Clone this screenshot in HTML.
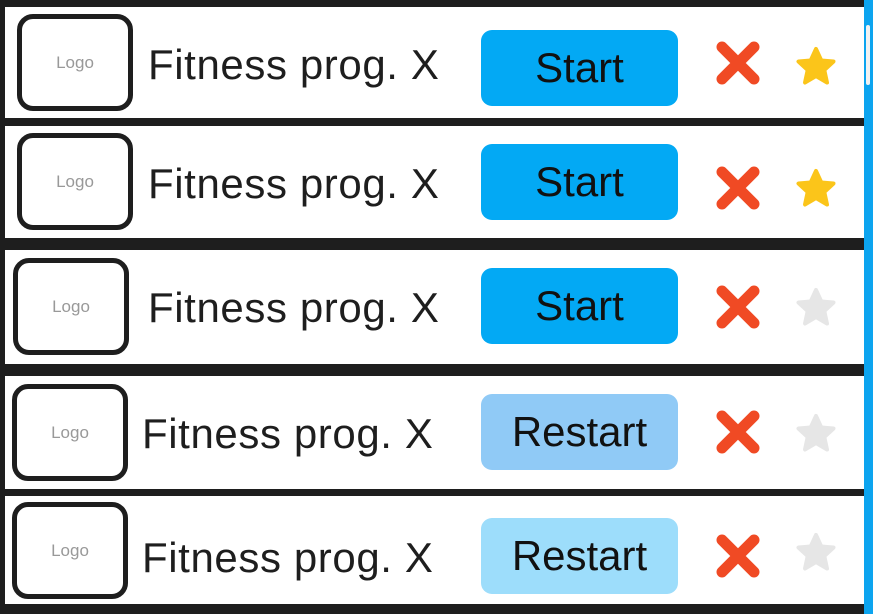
<!DOCTYPE html>
<html><head><meta charset="utf-8"><style>
*{margin:0;padding:0;box-sizing:border-box}
body{width:873px;height:614px;background:#1e1e1e;position:relative;overflow:hidden;font-family:"Liberation Sans",sans-serif}
.row{position:absolute;left:5px;width:859px;background:#fff}
.logo{position:absolute;width:116px;height:97px;border:5px solid #1e1e1e;border-radius:16px;color:#999;font-size:17px;display:flex;align-items:center;justify-content:center}
.t{position:absolute;font-size:42px;letter-spacing:0.6px;color:#1e1e1e;white-space:nowrap;line-height:1}
.b{position:absolute;left:481px;width:197px;height:76px;border-radius:11px;font-size:42px;color:#111;display:flex;align-items:center;justify-content:center}
svg{position:absolute}
</style></head><body>
<div class="row" style="top:7px;height:111px"></div>
<div class="row" style="top:126px;height:112px"></div>
<div class="row" style="top:250px;height:114px"></div>
<div class="row" style="top:376px;height:113px"></div>
<div class="row" style="top:496px;height:108px"></div>
<div style="position:absolute;left:864px;top:0;width:9px;height:614px;background:#0ca4ef"></div>
<div style="position:absolute;left:866px;top:25px;width:4px;height:60px;background:#f2f2f2;border-radius:2px"></div>

<div class="logo" style="left:17px;top:14px">Logo</div>
<div class="logo" style="left:17px;top:133px">Logo</div>
<div class="logo" style="left:13px;top:258px">Logo</div>
<div class="logo" style="left:12px;top:384px">Logo</div>
<div class="logo" style="left:12px;top:502px">Logo</div>

<div class="t" style="left:148px;top:44px">Fitness prog. X</div>
<div class="t" style="left:148px;top:163px">Fitness prog. X</div>
<div class="t" style="left:148px;top:287px">Fitness prog. X</div>
<div class="t" style="left:142px;top:413px">Fitness prog. X</div>
<div class="t" style="left:142px;top:537px">Fitness prog. X</div>

<div class="b" style="top:30px;background:#03a9f4">Start</div>
<div class="b" style="top:144px;background:#03a9f4">Start</div>
<div class="b" style="top:268px;background:#03a9f4">Start</div>
<div class="b" style="top:394px;background:#90caf6">Restart</div>
<div class="b" style="top:518px;background:#9dddfb">Restart</div>

<svg width="873" height="614" style="left:0;top:0">
<defs>
<g id="x"><path d="M-16,-16L16,16M16,-16L-16,16" stroke="#f04a24" stroke-width="11" stroke-linecap="round"/></g>
<g id="s"><polygon points="0,-18 5.3,-6.5 17.5,-5.5 8.3,3 11,15.5 0,9 -11,15.5 -8.3,3 -17.5,-5.5 -5.3,-6.5" stroke-linejoin="round" stroke-width="4"/></g>
</defs>
<use href="#x" x="738" y="63"/>
<use href="#x" x="738" y="188"/>
<use href="#x" x="738" y="307"/>
<use href="#x" x="738" y="432"/>
<use href="#x" x="738" y="556"/>
<use href="#s" x="816" y="67" fill="#fbc51a" stroke="#fbc51a"/>
<use href="#s" x="816" y="189" fill="#fbc51a" stroke="#fbc51a"/>
<use href="#s" x="816" y="308" fill="#e6e6e6" stroke="#e6e6e6"/>
<use href="#s" x="816" y="434" fill="#e6e6e6" stroke="#e6e6e6"/>
<use href="#s" x="816" y="553" fill="#e6e6e6" stroke="#e6e6e6"/>
</svg>
</body></html>
